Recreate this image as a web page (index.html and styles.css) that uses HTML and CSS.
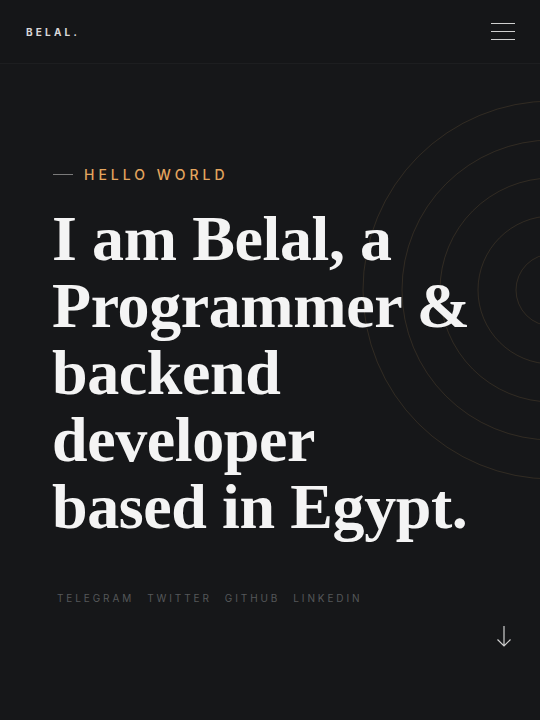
FILE: index.html
```html
<!DOCTYPE html>
<html>
<head>
<meta charset="utf-8">
<link rel="stylesheet" href="styles.css">
</head>
<body>
<header class="topbar">
  <div class="logo">BELAL.</div>
  <button class="menu" aria-label="menu"><span></span><span></span><span></span></button>
</header>
<main class="hero">
  <svg class="rings" width="400" height="400" viewBox="0 0 400 400">
    <circle cx="200" cy="200" r="189"/>
    <circle cx="200" cy="200" r="150"/>
    <circle cx="200" cy="200" r="112"/>
    <circle cx="200" cy="200" r="74"/>
    <circle cx="200" cy="200" r="36"/>
  </svg>
  <div class="eyebrow"><span class="dash"></span>HELLO WORLD</div>
  <h1 class="title">I am Belal, a<br>Programmer &amp;<br>backend<br>developer<br>based in Egypt.</h1>
  <nav class="social">
    <a>TELEGRAM</a><a>TWITTER</a><a>GITHUB</a><a>LINKEDIN</a>
  </nav>
  <svg class="arrow" width="16" height="24" viewBox="0 0 16 24">
    <path d="M8 1 V21 M1.5 14.5 L8 21 L14.5 14.5" fill="none" stroke="#cfcfcf" stroke-width="1.2"/>
  </svg>
</main>
</body>
</html>
```
FILE: styles.css
```css
html, body { margin: 0; padding: 0; }
body {
  background: #161719;
  width: 540px;
  height: 720px;
  overflow: hidden;
  font-family: "Inter", "Liberation Sans", sans-serif;
}
.topbar {
  height: 64px;
  box-sizing: border-box;
  border-bottom: 1px solid #1d1e20;
  background: #151618;
  display: flex;
  align-items: center;
  justify-content: space-between;
  padding: 0 25px 0 26px;
}
.logo {
  color: #d8d8d8;
  font-size: 10px;
  font-weight: 700;
  letter-spacing: 3.2px;
  margin-top: 1px;
}
.menu {
  background: none;
  border: 0;
  padding: 0;
  width: 24px;
  display: flex;
  flex-direction: column;
  gap: 7px;
}
.menu span { display: block; height: 1px; background: #cfcfcf; width: 24px; }
.hero {
  position: relative;
  height: 656px;
  padding: 102px 0 0 52px;
  box-sizing: border-box;
  overflow: hidden;
}
.rings {
  position: absolute;
  left: 352px;
  top: 26px;
  fill: none;
  stroke: rgba(190, 150, 90, 0.16);
  stroke-width: 1;
}
.eyebrow {
  position: relative;
  display: flex;
  align-items: center;
  color: #e4a55e;
  font-size: 14px;
  letter-spacing: 4px;
  font-weight: 500;
  height: 16px;
}
.dash { width: 20px; height: 1px; background: #7a7a7a; margin: 0 11px 0 1px; }
.title {
  position: relative;
  margin: 23px 0 0 0;
  color: #f4f4f4;
  font-family: "Liberation Serif", "DejaVu Serif", serif;
  font-weight: 700;
  font-size: 64px;
  line-height: 67px;
  letter-spacing: -0.4px;
}
.social {
  position: relative;
  display: flex;
  gap: 13px;
  margin: 52px 0 0 5px;
}
.social a {
  color: #55575a;
  font-size: 10px;
  letter-spacing: 2.9px;
}
.arrow {
  position: absolute;
  left: 496px;
  top: 561px;
}
```
